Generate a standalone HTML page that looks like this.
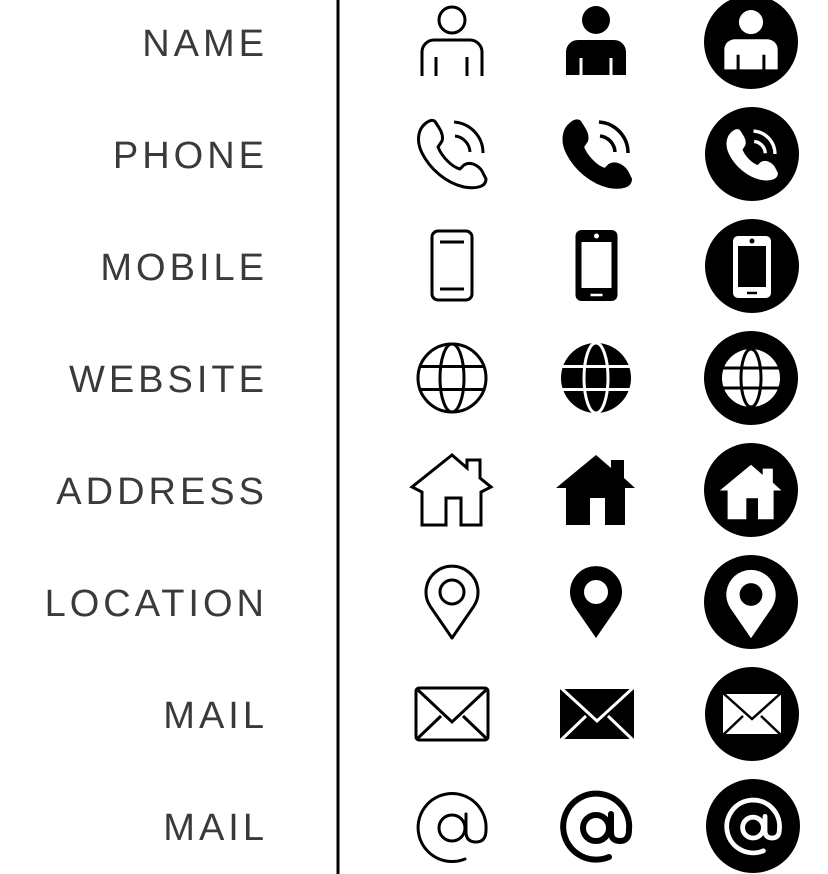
<!DOCTYPE html>
<html><head><meta charset="utf-8"><style>
html,body{margin:0;padding:0;background:#fff;}
svg{display:block}
text{font-family:"Liberation Sans",sans-serif;font-size:38px;letter-spacing:4px;fill:#3a3a3a;text-anchor:end}
</style></head><body>
<svg width="828" height="874" viewBox="0 0 828 874" xmlns="http://www.w3.org/2000/svg">
<defs></defs>
<rect width="828" height="874" fill="#fff"/>
<g>
<text x="268" y="56">NAME</text>
<text x="268" y="168">PHONE</text>
<text x="268" y="280">MOBILE</text>
<text x="268" y="392">WEBSITE</text>
<text x="268" y="504">ADDRESS</text>
<text x="268" y="616">LOCATION</text>
<text x="268" y="728">MAIL</text>
<text x="268" y="840">MAIL</text>
</g>
<rect x="336.5" y="0" width="3" height="874" fill="#000"/>

<!-- ROW 1 person -->
<g transform="translate(452,42)" fill="none" stroke="#000" stroke-width="3">
<circle cx="0" cy="-22" r="13"/>
<path d="M-30,34 V10 a12,12 0 0 1 12,-12 h36 a12,12 0 0 1 12,12 V34 M-16,15 V34 M15,15 V34"/>
</g>
<g transform="translate(596,42)">
<circle cx="0" cy="-22" r="14" fill="#000"/>
<path d="M-30,33 V10 a12,12 0 0 1 12,-12 h36 a12,12 0 0 1 12,12 V33 Z" fill="#000"/>
<path d="M-15,16 V34 M15,16 V34" stroke="#fff" stroke-width="3"/>
</g>
<g transform="translate(751,42)">
<circle r="47" fill="#000"/>
<g transform="translate(0,-1) scale(0.86)">
<circle cx="0" cy="-22" r="14" fill="#fff"/>
<path d="M-31,33 V10 a12,12 0 0 1 12,-12 h38 a12,12 0 0 1 12,12 V33 Z" fill="#fff"/>
<path d="M-15,16 V35 M15,16 V35" stroke="#000" stroke-width="3.5"/>
</g>
</g>

<!-- ROW 2 phone -->
<g transform="translate(452,153)">
<path fill="none" stroke="#000" stroke-width="3" stroke-linejoin="round" d="M-26,-30 C-34,-24 -36,-12 -30,0 C-22,16 -6,30 12,34 C24,36 34,34 34,26 L30,18 C26,12 18,8 12,12 L8,16 C0,14 -10,4 -14,-6 L-10,-12 C-8,-18 -12,-24 -16,-30 C-18,-34 -22,-33 -26,-30 Z"/>
<path d="M2,-31 A31,31 0 0 1 31,0 M3,-17 A17,17 0 0 1 18,-1" fill="none" stroke="#000" stroke-width="3"/>
</g>
<g transform="translate(597,153)">
<path fill="#000" stroke="#000" stroke-width="2" stroke-linejoin="round" d="M-26,-30 C-34,-24 -36,-12 -30,0 C-22,16 -6,30 12,34 C24,36 34,34 34,26 L30,18 C26,12 18,8 12,12 L8,16 C0,14 -10,4 -14,-6 L-10,-12 C-8,-18 -12,-24 -16,-30 C-18,-34 -22,-33 -26,-30 Z"/>
<path d="M2,-31 A31,31 0 0 1 31,0 M3,-17 A17,17 0 0 1 18,-1" fill="none" stroke="#000" stroke-width="3.5"/>
</g>
<g transform="translate(752,154)">
<circle r="47" fill="#000"/>
<g transform="translate(0,0) scale(0.74)">
<path fill="#fff" stroke="#fff" stroke-width="2" stroke-linejoin="round" d="M-26,-30 C-34,-24 -36,-12 -30,0 C-22,16 -6,30 12,34 C24,36 34,34 34,26 L30,18 C26,12 18,8 12,12 L8,16 C0,14 -10,4 -14,-6 L-10,-12 C-8,-18 -12,-24 -16,-30 C-18,-34 -22,-33 -26,-30 Z"/>
<path d="M2,-31 A31,31 0 0 1 31,0 M3,-17 A17,17 0 0 1 18,-1" fill="none" stroke="#fff" stroke-width="4.5"/>
</g>
</g>

<!-- ROW 3 mobile -->
<g transform="translate(452,266)" fill="none" stroke="#000" stroke-width="3">
<rect x="-20" y="-35" width="40" height="69" rx="6"/>
<path d="M-12,-24 H12 M-12,23 H12"/>
</g>
<g transform="translate(596.5,266)">
<rect x="-21" y="-36" width="42" height="71" rx="6" fill="#000"/>
<rect x="-15" y="-24" width="30" height="46" fill="#fff"/>
<circle cx="0" cy="-30" r="2.5" fill="#fff"/>
<path d="M-6,29 H6" stroke="#fff" stroke-width="2.5"/>
</g>
<g transform="translate(752,266)">
<circle r="47" fill="#000"/>
<rect x="-19" y="-30" width="38" height="62" rx="5" fill="#fff"/>
<rect x="-14" y="-20" width="28" height="41" fill="#000"/>
<circle cx="0" cy="-25" r="2.5" fill="#000"/>
<path d="M-5,27 H5" stroke="#000" stroke-width="2.5"/>
</g>

<!-- ROW 4 globe -->
<g transform="translate(452,378)" fill="none" stroke="#000" stroke-width="3">
<circle r="34"/>
<ellipse rx="12" ry="34"/>
<path d="M-32,-11.5 H32 M-32,11.5 H32"/>
</g>
<g transform="translate(596,378)">
<circle r="35" fill="#000"/>
<g fill="none" stroke="#fff" stroke-width="3">
<ellipse rx="12" ry="35"/>
<path d="M-36,-11.5 H36 M-36,11.5 H36"/>
</g>
</g>
<g transform="translate(751,378)">
<circle r="47" fill="#000"/>
<circle r="29" fill="#fff"/>
<g fill="none" stroke="#000" stroke-width="3">
<ellipse rx="10" ry="29"/>
<path d="M-30,-10 H30 M-30,10 H30"/>
</g>
</g>

<!-- ROW 5 house -->
<g transform="translate(452,490)">
<polygon fill="none" stroke="#000" stroke-width="3" stroke-linejoin="miter" points="0,-35 -40,-3 -30,2 -30,35 -6,35 -6,8 9,8 9,35 29,35 29,2 39,-3 28,-12 28,-30 15,-30 15,-22"/>
</g>
<g transform="translate(596,490)">
<polygon fill="#000" points="0,-35 -40,-2 -30,-2 -30,35 -6,35 -6,8 9,8 9,35 29,35 29,-2 39,-2 28,-12 28,-30 15,-30 15,-22"/>
</g>
<g transform="translate(751,490)">
<circle r="47" fill="#000"/>
<polygon transform="translate(0,2) scale(0.78)" fill="#fff" points="0,-35 -40,-2 -30,-2 -30,35 -6,35 -6,8 9,8 9,35 29,35 29,-2 39,-2 28,-12 28,-30 15,-30 15,-22"/>
</g>

<!-- ROW 6 pin -->
<g transform="translate(452,602)" fill="none" stroke="#000" stroke-width="3">
<path d="M0,36 L-21.5,4.7 A26,26 0 1 1 21.5,4.7 Z" stroke-linejoin="round"/>
<circle cx="0" cy="-10" r="12"/>
</g>
<g transform="translate(596,602)">
<path d="M0,36 L-21.5,4.7 A26,26 0 1 1 21.5,4.7 Z" fill="#000"/>
<circle cx="0" cy="-10" r="12" fill="#fff"/>
</g>
<g transform="translate(751,602)">
<circle r="47" fill="#000"/>
<g transform="translate(0,2) scale(0.95)">
<path d="M0,36 L-21.5,4.7 A26,26 0 1 1 21.5,4.7 Z" fill="#fff"/>
<circle cx="0" cy="-10" r="12" fill="#000"/>
</g>
</g>

<!-- ROW 7 mail -->
<g transform="translate(452,714)" fill="none" stroke="#000" stroke-width="3">
<rect x="-36" y="-26" width="72" height="52" rx="3"/>
<path d="M-34,-24 L0,8 L34,-24 M-34,24 L-11,2 M34,24 L11,2"/>
</g>
<g transform="translate(597,714)">
<rect x="-37" y="-25" width="74" height="50" fill="#000"/>
<path d="M-37,-27 L0,7 L37,-27 M-37,27 L-11,2 M37,27 L11,2" fill="none" stroke="#fff" stroke-width="3"/>
</g>
<g transform="translate(752,714)">
<circle r="47" fill="#000"/>
<rect x="-29" y="-20" width="58" height="40" fill="#fff"/>
<path d="M-29,-21 L0,5 L29,-21 M-29,21 L-9,2 M29,21 L9,2" fill="none" stroke="#000" stroke-width="2.5"/>
</g>

<!-- ROW 8 @ -->
<g transform="translate(452,826)" fill="none" stroke="#000" stroke-width="3" stroke-linecap="round">
<path d="M13,33 A34,34 0 1 1 34,4 Q34,16 24,16 Q14,16 14,6 V-12"/>
<circle cx="0" cy="2" r="13"/>
</g>
<g transform="translate(596,826)" fill="none" stroke="#000" stroke-width="6" stroke-linecap="round">
<path d="M13,31 A33,33 0 1 1 33,4 Q33,15 24,15 Q15,15 15,6 V-12"/>
<circle cx="0" cy="2" r="13"/>
</g>
<g transform="translate(753,826)">
<circle r="47" fill="#000"/>
<g transform="scale(0.8)" fill="none" stroke="#fff" stroke-width="6" stroke-linecap="round">
<path d="M13,31 A33,33 0 1 1 33,4 Q33,15 24,15 Q15,15 15,6 V-12"/>
<circle cx="0" cy="2" r="13"/>
</g>
</g>
</svg>
</body></html>
